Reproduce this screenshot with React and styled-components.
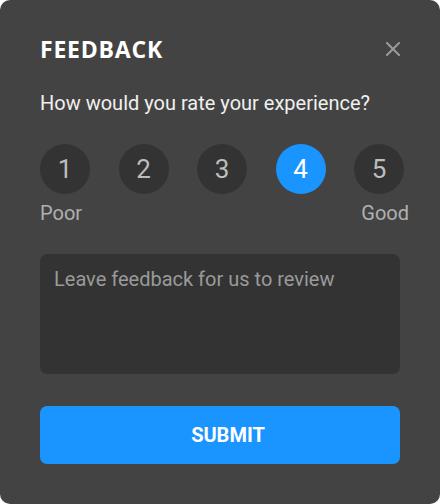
import React, { useState } from "react";
import styled, { createGlobalStyle } from "styled-components";

const Global = createGlobalStyle`
  html, body { margin: 0; padding: 0; background: #ffffff; }
  body { font-family: Roboto, "Liberation Sans", sans-serif; }
  * { box-sizing: border-box; }
`;

const Card = styled.div`
  width: 440px;
  height: 504px;
  background: #434343;
  border-radius: 10px;
  padding: 34px 40px 40px;
  display: flex;
  flex-direction: column;
`;

const Header = styled.div`
  display: flex;
  justify-content: space-between;
  align-items: center;
  height: 30px;
`;

const Title = styled.h2`
  margin: 0;
  font-family: "Open Sans", sans-serif;
  font-weight: 700;
  font-size: 23px;
  line-height: 30px;
  color: #ffffff;
  letter-spacing: 0.8px;
`;

const Close = styled.button`
  border: none;
  background: none;
  padding: 0;
  width: 14px;
  height: 14px;
  display: flex;
  cursor: pointer;
`;

const Question = styled.p`
  margin: 27px 0 0;
  font-size: 20px;
  line-height: 24px;
  color: #f0f0f0;
`;

const Ratings = styled.div`
  display: flex;
  gap: 28.5px;
  margin-top: 29px;
`;

const Circle = styled.button`
  flex: 0 0 50px;
  width: 50px;
  height: 50px;
  border-radius: 50%;
  border: none;
  padding: 0;
  background: ${(p) => (p.$active ? "#1a94ff" : "#333333")};
  color: ${(p) => (p.$active ? "#ffffff" : "#bdbdbd")};
  font-family: Roboto, sans-serif;
  font-size: 26px;
  display: flex;
  align-items: center;
  justify-content: center;
  cursor: pointer;
`;

const Labels = styled.div`
  display: flex;
  justify-content: space-between;
  width: 369px;
  margin-top: 7px;
  font-size: 20px;
  line-height: 24px;
  color: #b0b0b0;
`;

const TextArea = styled.textarea`
  margin-top: 29px;
  height: 120px;
  width: 360px;
  border: none;
  border-radius: 7px;
  background: #333333;
  padding: 13px 14px;
  font-family: Roboto, sans-serif;
  font-size: 20px;
  line-height: 24px;
  color: #eeeeee;
  resize: none;
  outline: none;
  &::placeholder { color: #9a9a9a; }
`;

const Submit = styled.button`
  margin-top: 32px;
  height: 58px;
  width: 360px;
  border: none;
  border-radius: 7px;
  background: #1a94ff;
  color: #ffffff;
  font-family: Roboto, sans-serif;
  font-weight: 700;
  font-size: 20px;
  padding: 0 0 0 16px;
  cursor: pointer;
`;

export default function App() {
  const [rating, setRating] = useState(4);
  return (
    <>
      <Global />
      <Card>
        <Header>
          <Title>FEEDBACK</Title>
          <Close aria-label="Close">
            <svg width="14" height="14" viewBox="0 0 14 14">
              <path d="M1 1 L13 13 M13 1 L1 13" stroke="#9a9a9a" strokeWidth="2" strokeLinecap="square" />
            </svg>
          </Close>
        </Header>
        <Question>How would you rate your experience?</Question>
        <Ratings>
          {[1, 2, 3, 4, 5].map((n) => (
            <Circle key={n} $active={n === rating} onClick={() => setRating(n)}>
              {n}
            </Circle>
          ))}
        </Ratings>
        <Labels>
          <span>Poor</span>
          <span>Good</span>
        </Labels>
        <TextArea placeholder="Leave feedback for us to review" />
        <Submit>SUBMIT</Submit>
      </Card>
    </>
  );
}
